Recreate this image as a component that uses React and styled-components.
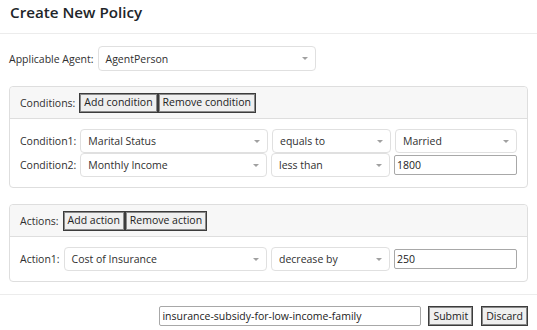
import React from 'react'
import styled, { createGlobalStyle } from 'styled-components'

const GlobalStyle = createGlobalStyle`
  body {
    margin: 0;
    background: #fff;
    font-family: "Open Sans", "Noto Sans", sans-serif;
    color: #333;
  }
`

function Select({ value, width, grow }) {
    return (
        <SelectBox width={width} grow={grow}>
            <span>{value}</span>
            <Caret />
        </SelectBox>
    )
}

function Card({ title, addText, removeText, children }) {
    return (
        <CardWrap>
            <CardHeader>
                <Label>{title}</Label>
                <Button>{addText}</Button>
                <Button>{removeText}</Button>
            </CardHeader>
            <CardBody>{children}</CardBody>
        </CardWrap>
    )
}

export default function App() {
    return (
        <Page>
            <GlobalStyle />
            <TitleBar>
                <h1>Create New Policy</h1>
            </TitleBar>

            <AgentRow>
                <Label>Applicable Agent:</Label>
                <Select value="AgentPerson" width="218px" />
            </AgentRow>

            <Card title="Conditions:" addText="Add condition" removeText="Remove condition">
                <Row>
                    <Label>Condition1:</Label>
                    <Select value="Marital Status" grow />
                    <Select value="equals to" width="119px" />
                    <Select value="Married" width="122px" />
                </Row>
                <Row>
                    <Label>Condition2:</Label>
                    <Select value="Monthly Income" grow />
                    <Select value="less than" width="119px" />
                    <Input defaultValue="1800" width="123px" />
                </Row>
            </Card>

            <Card title="Actions:" addText="Add action" removeText="Remove action">
                <Row>
                    <Label>Action1:</Label>
                    <Select value="Cost of Insurance" grow />
                    <Select value="decrease by" width="119px" />
                    <Input defaultValue="250" width="123px" />
                </Row>
            </Card>

            <Footer>
                <Input defaultValue="insurance-subsidy-for-low-income-family" width="262px" />
                <Button>Submit</Button>
                <Button>Discard</Button>
            </Footer>
        </Page>
    )
}

const Page = styled.div`
  width: 537px;
  font-size: 10.5px;
`

const TitleBar = styled.div`
  height: 34px;
  box-sizing: border-box;
  border-bottom: 1px solid #ececec;
  padding: 2px 10px 0;

  h1 {
    margin: 0;
    font-size: 15.2px;
    line-height: 20px;
    font-weight: 600;
    color: #212529;
  }
`

const Label = styled.span`
  color: #2f2f2f;
  white-space: nowrap;
  margin-right: 4px;
`

const AgentRow = styled.div`
  display: flex;
  align-items: center;
  margin: 12px 9px 0;
  height: 25px;
`

const SelectBox = styled.div`
  box-sizing: border-box;
  height: 24px;
  width: ${props => props.width || 'auto'};
  flex: ${props => (props.grow ? '1' : 'none')};
  border: 1px solid #e0e0e0;
  border-radius: 4px;
  background: #fff;
  display: flex;
  align-items: center;
  justify-content: space-between;
  padding: 0 7px 0 7px;
  color: #2f2f2f;
  white-space: nowrap;

  ${AgentRow} & {
    height: 25px;
  }
`

const Caret = styled.span`
  width: 0;
  height: 0;
  border-left: 3px solid transparent;
  border-right: 3px solid transparent;
  border-top: 3px solid #a0a0a0;
`

const CardWrap = styled.div`
  margin: 15px 9px 0;
  border: 1px solid #dedede;
  border-radius: 4px;
  & + & {
    margin-top: 16px;
  }
`

const CardHeader = styled.div`
  display: flex;
  align-items: center;
  height: 32px;
  box-sizing: border-box;
  padding: 0 10px;
  background: #f7f7f7;
  border-bottom: 1px solid #dedede;
  border-radius: 4px 4px 0 0;
`

const CardBody = styled.div`
  padding: 10px;
`

const Row = styled.div`
  display: flex;
  align-items: center;
  gap: 4px;

  ${Label} {
    margin-right: 0;
  }
`

const Button = styled.button`
  font-family: inherit;
  font-size: 10.5px;
  color: #222;
  height: 20px;
  padding: 0 4px;
  background: #efefef;
  border: 1px solid #3c3c3c;
  box-shadow: inset 0 0 0 1px #8a8a8a;
  border-radius: 0;
  line-height: 1;
`

const Input = styled.input`
  box-sizing: border-box;
  width: ${props => props.width};
  height: 20px;
  font-family: inherit;
  font-size: 10.5px;
  color: #222;
  border: 1px solid #a8a8a8;
  border-radius: 2px;
  padding: 0 2px;
  outline: none;
`

const Footer = styled.div`
  margin-top: 12px;
  border-top: 1px solid #ececec;
  padding: 11px 9px 0 0;
  display: flex;
  justify-content: flex-end;
  align-items: center;
  gap: 7px;

  ${Button} + ${Button} {
    margin-left: 1px;
  }
`
